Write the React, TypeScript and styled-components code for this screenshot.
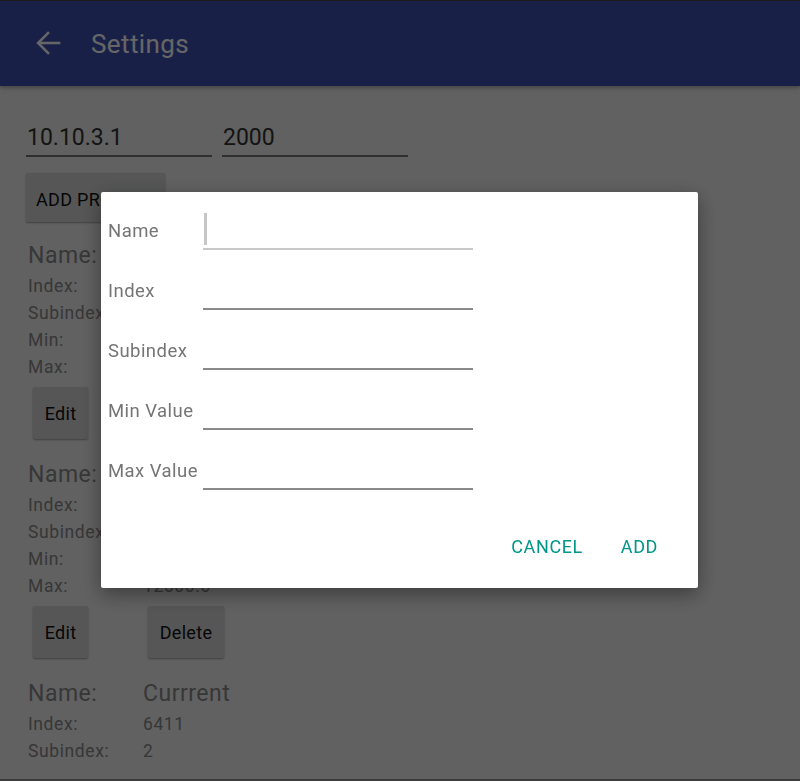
import React from "react";
import styled, { createGlobalStyle } from "styled-components";

const Global = createGlobalStyle`
  html, body { margin: 0; padding: 0; }
  body { font-family: Roboto, "Noto Sans", "Liberation Sans", sans-serif; background: #f2f2f2; }
  #root { width: 800px; height: 781px; overflow: hidden; position: relative; }
`;

const Page = styled.div`
  width: 800px;
  height: 781px;
  box-sizing: border-box;
  border-top: 1px solid #474747;
  border-bottom: 2px solid #969696;
  background: #f2f2f2;
  overflow: hidden;
  display: flex;
  flex-direction: column;
`;

const AppBar = styled.header`
  height: 85px;
  flex-shrink: 0;
  background: #3f51b5;
  display: flex;
  align-items: center;
  box-shadow: 0 2px 4px rgba(0, 0, 0, 0.3);
  position: relative;
  z-index: 1;
`;

const BackButton = styled.div`
  width: 34px;
  height: 34px;
  margin-left: 32px;
  margin-top: -1px;
  display: flex;
`;

const Title = styled.h1`
  margin: 0 0 0 25px;
  font-size: 26px;
  font-weight: 400;
  color: #ffffff;
  letter-spacing: 0.4px;
`;

const Scroll = styled.div`
  flex: 1;
  min-height: 0;
  overflow: hidden;
  margin-bottom: 14px;
`;

const Content = styled.main`
  padding: 31px 26px 0 26px;
  display: flex;
  flex-direction: column;
  align-items: flex-start;
`;

const ConnRow = styled.div`
  display: flex;
  gap: 10px;
`;

const EditField = styled.div`
  width: 186px;
  height: 40px;
  box-sizing: border-box;
  border-bottom: 2px solid #777777;
  font-size: 23px;
  line-height: 36px;
  padding: 3px 0 0 1px;
  color: #333333;
`;

const RaisedButton = styled.button<{ $w: number; $h: number }>`
  width: ${(p) => p.$w}px;
  height: ${(p) => p.$h}px;
  background: #d6d7d7;
  border: none;
  border-radius: 2px;
  box-shadow: 0 1px 2px rgba(0, 0, 0, 0.35);
  font-family: inherit;
  font-size: 18px;
  letter-spacing: 0.3px;
  color: #111111;
  padding: 0;
  text-align: center;
  white-space: nowrap;
`;

const AddButton = styled(RaisedButton)`
  margin-top: 16px;
  text-align: left;
  padding: 3px 0 0 10px;
  overflow: hidden;
`;

const List = styled.div`
  margin-top: 17px;
  display: flex;
  flex-direction: column;
  gap: 19px;
  padding-left: 2px;
`;

const Item = styled.section`
  display: flex;
  flex-direction: column;
`;

const InfoRow = styled.div<{ $big?: boolean }>`
  display: grid;
  grid-template-columns: 115px auto;
  font-size: ${(p) => (p.$big ? 23 : 17.5)}px;
  letter-spacing: ${(p) => (p.$big ? 0.5 : 0.6)}px;
  line-height: ${(p) => (p.$big ? 34 : 27)}px;
  color: #8a8a8a;
`;

const Actions = styled.div`
  display: flex;
  gap: 60px;
  margin-top: 6px;
  padding-left: 5px;
`;

const Scrim = styled.div`
  position: fixed;
  inset: 0;
  background: rgba(0, 0, 0, 0.6);
  z-index: 5;
`;

const Dialog = styled.div`
  position: fixed;
  left: 101px;
  top: 192px;
  width: 597px;
  height: 396px;
  background: #ffffff;
  border-radius: 2px;
  box-shadow: 0 6px 20px rgba(0, 0, 0, 0.4);
  z-index: 6;
  box-sizing: border-box;
  padding: 17px 0 0 7px;
  display: flex;
  flex-direction: column;
`;

const Form = styled.div`
  display: flex;
  flex-direction: column;
  gap: 20px;
`;

const FormRow = styled.div`
  display: flex;
  align-items: center;
  height: 40px;
`;

const FormLabel = styled.label`
  width: 95px;
  font-size: 18.5px;
  letter-spacing: 0.45px;
  color: #757575;
  padding-top: 4px;
  white-space: nowrap;
`;

const FormInput = styled.div<{ $focused?: boolean }>`
  width: 270px;
  height: 38px;
  border-bottom: 2px solid ${(p) => (p.$focused ? "#c8c8c8" : "#8a8a8a")};
  position: relative;
  margin-top: 2px;
`;

const Cursor = styled.span`
  position: absolute;
  left: 1px;
  top: 3px;
  width: 3px;
  height: 32px;
  background: #c6c6c6;
`;

const DialogActions = styled.div`
  display: flex;
  justify-content: flex-end;
  gap: 6px;
  margin-top: 33px;
  padding-right: 24px;
`;

const FlatButton = styled.button`
  height: 48px;
  padding: 0 16px;
  background: transparent;
  border: none;
  font-family: inherit;
  font-size: 18px;
  letter-spacing: 0.6px;
  color: #009688;
  text-transform: uppercase;
`;

const items = [
  { name: "Voltage", index: "6410", sub: "1", min: "0.0", max: "500.0" },
  { name: "Speed", index: "6412", sub: "3", min: "0.0", max: "12500.0" },
  { name: "Currrent", index: "6411", sub: "2", min: "0.0", max: "100.0" },
];

const fields = ["Name", "Index", "Subindex", "Min Value", "Max Value"];

export default function App() {
  return (
    <>
      <Global />
      <Page>
        <AppBar>
          <BackButton>
            <svg width="34" height="34" viewBox="0 0 24 24" fill="none">
              <path d="M4.6 12H20" stroke="#fff" strokeWidth="1.8" />
              <path d="M12 4.3L4.3 12L12 19.7" stroke="#fff" strokeWidth="1.8" />
            </svg>
          </BackButton>
          <Title>Settings</Title>
        </AppBar>
        <Scroll>
          <Content>
            <ConnRow>
              <EditField>10.10.3.1</EditField>
              <EditField>2000</EditField>
            </ConnRow>
            <AddButton $w={139} $h={49}>ADD PROPERTY</AddButton>
            <List>
              {items.map((it) => (
                <Item key={it.name}>
                  <InfoRow $big>
                    <span>Name:</span>
                    <span>{it.name}</span>
                  </InfoRow>
                  <InfoRow>
                    <span>Index:</span>
                    <span>{it.index}</span>
                  </InfoRow>
                  <InfoRow>
                    <span>Subindex:</span>
                    <span>{it.sub}</span>
                  </InfoRow>
                  <InfoRow>
                    <span>Min:</span>
                    <span>{it.min}</span>
                  </InfoRow>
                  <InfoRow>
                    <span>Max:</span>
                    <span>{it.max}</span>
                  </InfoRow>
                  <Actions>
                    <RaisedButton $w={55} $h={52}>Edit</RaisedButton>
                    <RaisedButton $w={76} $h={52}>Delete</RaisedButton>
                  </Actions>
                </Item>
              ))}
            </List>
          </Content>
        </Scroll>
      </Page>
      <Scrim />
      <Dialog>
        <Form>
          {fields.map((f, i) => (
            <FormRow key={f}>
              <FormLabel>{f}</FormLabel>
              <FormInput $focused={i === 0}>{i === 0 && <Cursor />}</FormInput>
            </FormRow>
          ))}
        </Form>
        <DialogActions>
          <FlatButton>Cancel</FlatButton>
          <FlatButton>Add</FlatButton>
        </DialogActions>
      </Dialog>
    </>
  );
}
